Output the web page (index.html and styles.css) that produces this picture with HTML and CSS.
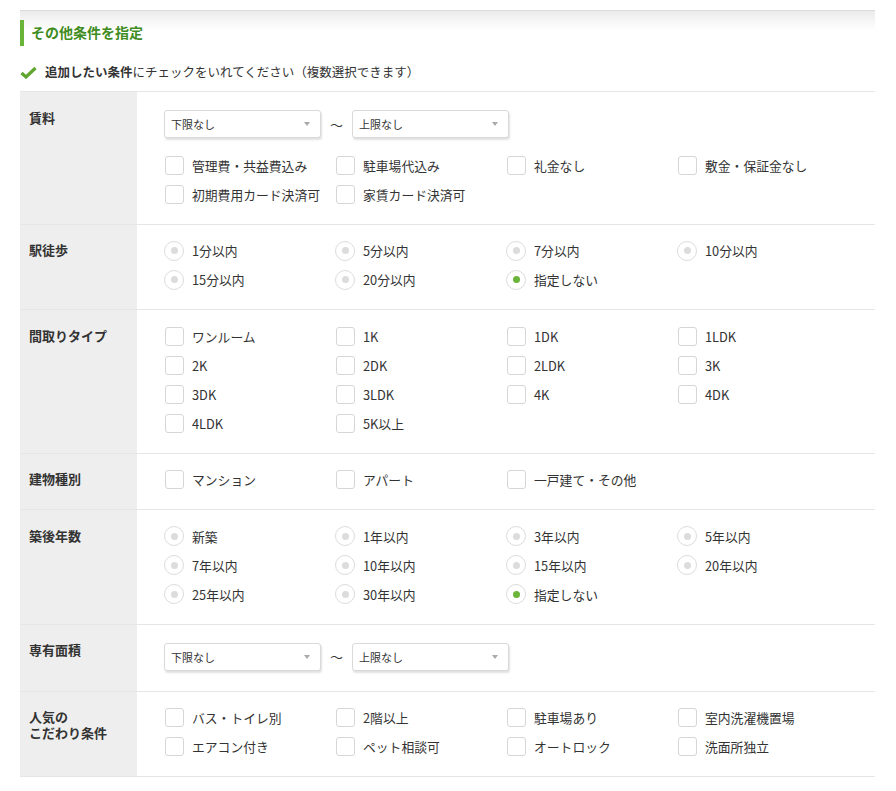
FILE: index.html
```html
<!DOCTYPE html>
<html lang="ja">
<head>
<meta charset="utf-8">
<title>その他条件を指定</title>
<link rel="stylesheet" href="styles.css">
</head>
<body>
<div class="panel">
  <h2 class="heading">その他条件を指定</h2>
  <p class="note">
    <svg class="tick" width="17" height="13" viewBox="0 0 17 13"><path d="M1.5 7 L6 11 L15.5 2" fill="none" stroke="#5fa52e" stroke-width="3.2" stroke-linejoin="miter"/></svg>
    <span><b>追加したい条件</b>にチェックをいれてください（複数選択できます）</span>
  </p>
  <div class="table">
    <div class="row">
      <div class="label">賃料</div>
      <div class="cell">
        <div class="range">
          <div class="select">下限なし<span class="arrow"></span></div>
          <span class="tilde">～</span>
          <div class="select">上限なし<span class="arrow"></span></div>
        </div>
        <div class="opts after-range">
          <label class="opt"><span class="cb"></span>管理費・共益費込み</label>
          <label class="opt"><span class="cb"></span>駐車場代込み</label>
          <label class="opt"><span class="cb"></span>礼金なし</label>
          <label class="opt"><span class="cb"></span>敷金・保証金なし</label>
          <label class="opt"><span class="cb"></span>初期費用カード決済可</label>
          <label class="opt"><span class="cb"></span>家賃カード決済可</label>
        </div>
      </div>
    </div>
    <div class="row">
      <div class="label">駅徒歩</div>
      <div class="cell">
        <div class="opts">
          <label class="opt"><span class="rd"></span>1分以内</label>
          <label class="opt"><span class="rd"></span>5分以内</label>
          <label class="opt"><span class="rd"></span>7分以内</label>
          <label class="opt"><span class="rd"></span>10分以内</label>
          <label class="opt"><span class="rd"></span>15分以内</label>
          <label class="opt"><span class="rd"></span>20分以内</label>
          <label class="opt"><span class="rd on"></span>指定しない</label>
        </div>
      </div>
    </div>
    <div class="row">
      <div class="label">間取りタイプ</div>
      <div class="cell">
        <div class="opts">
          <label class="opt"><span class="cb"></span>ワンルーム</label>
          <label class="opt"><span class="cb"></span>1K</label>
          <label class="opt"><span class="cb"></span>1DK</label>
          <label class="opt"><span class="cb"></span>1LDK</label>
          <label class="opt"><span class="cb"></span>2K</label>
          <label class="opt"><span class="cb"></span>2DK</label>
          <label class="opt"><span class="cb"></span>2LDK</label>
          <label class="opt"><span class="cb"></span>3K</label>
          <label class="opt"><span class="cb"></span>3DK</label>
          <label class="opt"><span class="cb"></span>3LDK</label>
          <label class="opt"><span class="cb"></span>4K</label>
          <label class="opt"><span class="cb"></span>4DK</label>
          <label class="opt"><span class="cb"></span>4LDK</label>
          <label class="opt"><span class="cb"></span>5K以上</label>
        </div>
      </div>
    </div>
    <div class="row">
      <div class="label">建物種別</div>
      <div class="cell">
        <div class="opts">
          <label class="opt"><span class="cb"></span>マンション</label>
          <label class="opt"><span class="cb"></span>アパート</label>
          <label class="opt"><span class="cb"></span>一戸建て・その他</label>
        </div>
      </div>
    </div>
    <div class="row">
      <div class="label">築後年数</div>
      <div class="cell">
        <div class="opts">
          <label class="opt"><span class="rd"></span>新築</label>
          <label class="opt"><span class="rd"></span>1年以内</label>
          <label class="opt"><span class="rd"></span>3年以内</label>
          <label class="opt"><span class="rd"></span>5年以内</label>
          <label class="opt"><span class="rd"></span>7年以内</label>
          <label class="opt"><span class="rd"></span>10年以内</label>
          <label class="opt"><span class="rd"></span>15年以内</label>
          <label class="opt"><span class="rd"></span>20年以内</label>
          <label class="opt"><span class="rd"></span>25年以内</label>
          <label class="opt"><span class="rd"></span>30年以内</label>
          <label class="opt"><span class="rd on"></span>指定しない</label>
        </div>
      </div>
    </div>
    <div class="row">
      <div class="label">専有面積</div>
      <div class="cell">
        <div class="range only">
          <div class="select">下限なし<span class="arrow"></span></div>
          <span class="tilde">～</span>
          <div class="select">上限なし<span class="arrow"></span></div>
        </div>
      </div>
    </div>
    <div class="row">
      <div class="label"><span class="ln">人気の</span><span class="ln">こだわり条件</span></div>
      <div class="cell">
        <div class="opts">
          <label class="opt"><span class="cb"></span>バス・トイレ別</label>
          <label class="opt"><span class="cb"></span>2階以上</label>
          <label class="opt"><span class="cb"></span>駐車場あり</label>
          <label class="opt"><span class="cb"></span>室内洗濯機置場</label>
          <label class="opt"><span class="cb"></span>エアコン付き</label>
          <label class="opt"><span class="cb"></span>ペット相談可</label>
          <label class="opt"><span class="cb"></span>オートロック</label>
          <label class="opt"><span class="cb"></span>洗面所独立</label>
        </div>
      </div>
    </div>
  </div>
</div>
</body>
</html>
```

FILE: styles.css
```css
html, body {
  margin: 0;
  padding: 0;
  background: #fff;
}
body {
  padding: 10px 21px 0 20px;
  font-family: "Noto Sans CJK JP", "Noto Sans", sans-serif;
  color: #333;
  font-size: 13px;
}
.panel {
  width: 855px;
  border-top: 1px solid #dcdcdc;
  background: linear-gradient(#ebebeb 0, #f8f8f8 12px, #fff 20px) no-repeat;
  background-size: 100% 20px;
}
.heading {
  margin: 9px 0 0;
  height: 26px;
  line-height: 25px;
  border-left: 4px solid #6ab43a;
  padding-left: 7px;
  font-size: 14px;
  font-weight: bold;
  color: #3f8c22;
}
.note {
  margin: 16px 0 9px;
  height: 20px;
  display: flex;
  align-items: center;
  gap: 8px;
  font-size: 12.5px;
  line-height: 20px;
  color: #333;
}
.note b { font-weight: bold; }
.tick { display: block; margin-top: 1px; }
.table {
  border-bottom: 1px solid #e6e6e6;
}
.row {
  display: grid;
  grid-template-columns: 117px 1fr;
  border-top: 1px solid #e6e6e6;
}
.label {
  background: #eeeeee;
  padding: 17.5px 0 0 9px;
  font-weight: bold;
  font-size: 13px;
  line-height: 16px;
  color: #333;
}
.label .ln {
  display: block;
  height: 16px;
  overflow: visible;
}
.cell {
  padding: 11.5px 0 15px 27px;
}
.opts {
  display: grid;
  grid-template-columns: repeat(4, 171px);
}
.opts.after-range { margin-top: 12.5px; }
.opt {
  display: flex;
  align-items: center;
  height: 29px;
  gap: 8px;
  font-size: 12.8px;
  color: #333;
  white-space: nowrap;
}
.cb {
  flex: none;
  box-sizing: border-box;
  width: 19px;
  height: 19px;
  margin-left: 1px;
  border: 1px solid #d6d6d6;
  border-radius: 3px;
  background: #fff;
}
.rd {
  flex: none;
  box-sizing: border-box;
  width: 20px;
  height: 20px;
  border: 1px solid #dcdcdc;
  border-radius: 50%;
  background: #fff;
  display: flex;
  align-items: center;
  justify-content: center;
}
.rd::after {
  content: "";
  width: 7px;
  height: 7px;
  border-radius: 50%;
  background: #dcdcdc;
}
.rd.on::after { background: #6ab43a; }
.range {
  display: flex;
  align-items: center;
  margin-top: 6.5px;
}
.range.only { margin-bottom: 5px; }
.select {
  position: relative;
  box-sizing: border-box;
  width: 157px;
  height: 28px;
  border: 1px solid #d9d9d9;
  border-radius: 3px;
  background: #fff;
  box-shadow: 1px 2px 2px rgba(0, 0, 0, 0.12);
  padding-left: 6px;
  font-size: 11px;
  line-height: 26px;
  color: #333;
}
.arrow {
  position: absolute;
  right: 10px;
  top: 11px;
  width: 0;
  height: 0;
  border-left: 3.5px solid transparent;
  border-right: 3.5px solid transparent;
  border-top: 4px solid #aaa;
}
.tilde {
  width: 31px;
  text-align: center;
  font-size: 13px;
  color: #333;
}
```
